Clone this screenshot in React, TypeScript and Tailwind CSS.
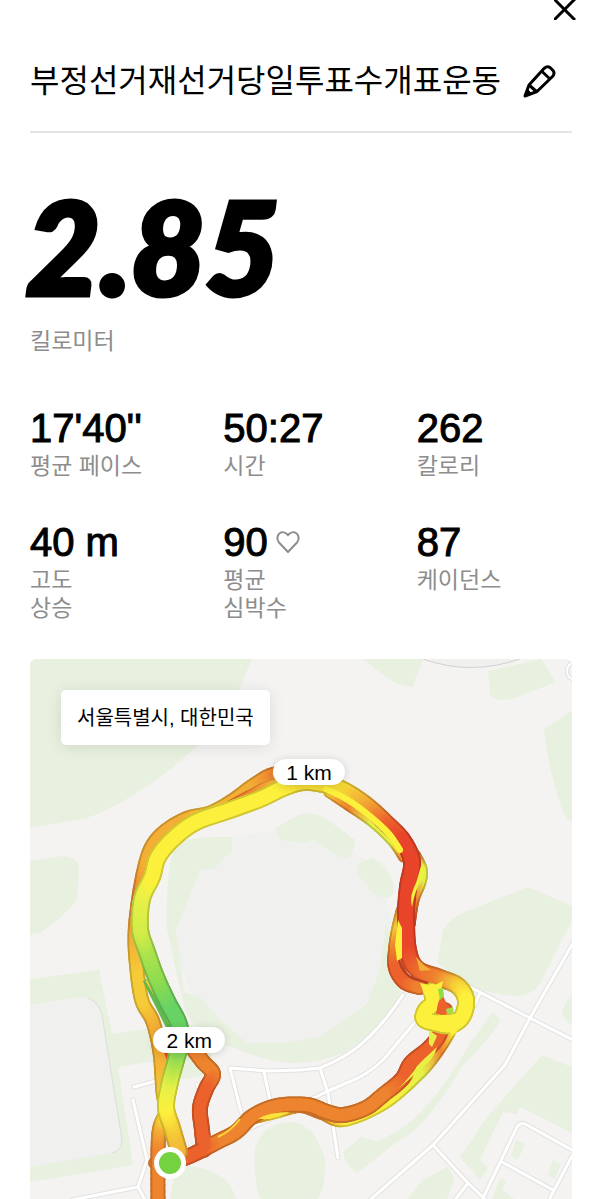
import type { ReactNode } from "react";

type TrackPoint = [x: number, y: number, color: string];

const RED = "#e8452a";
const RUST = "#ec622c";
const ORANGE = "#ee842f";
const AMBER = "#f3ae36";
const GOLD = "#f5cb38";
const YELLOW = "#fcf03c";
const LIME = "#e4f048";
const GREEN = "#68d264";

const outerLoop: TrackPoint[] = [
  [158, 1205, ORANGE],
  [158, 1150, ORANGE],
  [160, 1127, AMBER],
  [166, 1111, YELLOW],
  [163, 1092, GOLD],
  [160, 1053, AMBER],
  [153, 1022, AMBER],
  [142, 1001, GOLD],
  [137, 970, GOLD],
  [135, 935, AMBER],
  [139, 897, ORANGE],
  [146, 862, AMBER],
  [154, 843, AMBER],
  [168, 829, AMBER],
  [188, 818, AMBER],
  [210, 813, GOLD],
  [232, 801, AMBER],
  [254, 785, AMBER],
  [275, 774, ORANGE],
  [300, 777, GOLD],
];

const outerStrand: TrackPoint[] = [
  [228, 805, RUST],
  [250, 793, ORANGE],
  [272, 783, AMBER],
  [300, 780, GOLD],
];

const mainLoop: TrackPoint[] = [
  [179, 1152, AMBER],
  [172, 1128, GOLD],
  [166, 1107, YELLOW],
  [170, 1082, LIME],
  [176, 1060, "#a5e04e"],
  [181, 1040, GREEN],
  [178, 1022, GREEN],
  [168, 1003, GREEN],
  [156, 977, "#90dc50"],
  [147, 952, "#a8e24e"],
  [140, 929, "#d2ec48"],
  [142, 899, LIME],
  [152, 877, YELLOW],
  [158, 857, YELLOW],
  [174, 838, YELLOW],
  [196, 822, YELLOW],
  [227, 811, YELLOW],
  [260, 799, YELLOW],
  [283, 788, YELLOW],
  [303, 782, "#f5dc36"],
  [323, 784, "#f5dc36"],
  [343, 790, "#f5dc36"],
  [366, 805, AMBER],
  [388, 825, RUST],
  [403, 841, RED],
  [412, 862, RED],
  [408, 887, RED],
  [406, 915, RED],
  [408, 950, RED],
  [417, 969, RUST],
  [440, 978, ORANGE],
  [458, 986, GOLD],
  [466, 1000, YELLOW],
  [462, 1017, YELLOW],
  [450, 1025, YELLOW],
  [436, 1023, YELLOW],
  [424, 1019, YELLOW],
  [426, 1010, YELLOW],
  [433, 1003, YELLOW],
  [432, 991, YELLOW],
];

const rightInside: TrackPoint[] = [
  [328, 793, GOLD],
  [349, 807, ORANGE],
  [372, 823, LIME],
  [392, 842, LIME],
  [403, 858, ORANGE],
];

const rightEdge: TrackPoint[] = [
  [326, 789, YELLOW],
  [348, 800, YELLOW],
  [371, 817, YELLOW],
  [389, 834, YELLOW],
  [400, 850, YELLOW],
];

const rightBump: TrackPoint[] = [
  [414, 855, RED],
  [421, 869, LIME],
  [420, 882, LIME],
  [413, 900, ORANGE],
  [409, 925, RED],
];

const innerDescent: TrackPoint[] = [
  [404, 910, ORANGE],
  [399, 930, GOLD],
  [396, 950, ORANGE],
  [396, 968, RUST],
  [405, 982, RUST],
  [420, 987, ORANGE],
];

const bottomShadow: TrackPoint[] = [
  [449, 1032, YELLOW],
  [437, 1051, ORANGE],
  [419, 1073, LIME],
  [384, 1103, YELLOW],
  [344, 1120, YELLOW],
  [322, 1113, ORANGE],
  [300, 1106, ORANGE],
  [275, 1112, YELLOW],
  [250, 1118, ORANGE],
];

const bottomLeg: TrackPoint[] = [
  [445, 1010, RUST],
  [440, 1033, RUST],
  [429, 1048, RUST],
  [411, 1063, RUST],
  [402, 1079, RUST],
  [383, 1095, ORANGE],
  [366, 1108, ORANGE],
  [343, 1115, ORANGE],
  [327, 1112, ORANGE],
  [307, 1105, ORANGE],
  [277, 1106, ORANGE],
  [253, 1116, ORANGE],
  [236, 1132, ORANGE],
  [217, 1142, ORANGE],
  [200, 1151, RUST],
  [187, 1157, RUST],
  [170, 1163, RUST],
];

const shortcut: TrackPoint[] = [
  [194, 1050, ORANGE],
  [203, 1062, ORANGE],
  [213, 1074, ORANGE],
  [206, 1089, RUST],
  [200, 1108, RUST],
  [202, 1130, RUST],
  [204, 1150, RUST],
];

function mix(from: string, to: string, t: number, shade = 1) {
  const channel = (hex: string, i: number) =>
    parseInt(hex.slice(1 + i * 2, 3 + i * 2), 16);
  const rgb = [0, 1, 2].map((i) =>
    Math.round(
      (channel(from, i) + (channel(to, i) - channel(from, i)) * t) * shade,
    ),
  );
  return `rgb(${rgb.join(",")})`;
}

// Catmull-Rom, b -> c
function curve(a: number, b: number, c: number, d: number, t: number) {
  return (
    0.5 *
    (2 * b +
      (c - a) * t +
      (2 * a - 5 * b + 4 * c - d) * t * t +
      (3 * b - a - 3 * c + d) * t * t * t)
  );
}

const STEPS = 10;

function Track({
  points,
  width = 12,
  edge = 2,
}: {
  points: TrackPoint[];
  width?: number;
  edge?: number;
}) {
  const pieces: { d: string; fill: string; border: string }[] = [];
  for (let i = 0; i < points.length - 1; i++) {
    const p0 = points[Math.max(i - 1, 0)];
    const p1 = points[i];
    const p2 = points[i + 1];
    const p3 = points[Math.min(i + 2, points.length - 1)];
    for (let s = 0; s < STEPS; s++) {
      const at = (t: number) =>
        `${curve(p0[0], p1[0], p2[0], p3[0], t).toFixed(2)} ${curve(p0[1], p1[1], p2[1], p3[1], t).toFixed(2)}`;
      pieces.push({
        d: `M${at(s / STEPS)}L${at((s + 1) / STEPS)}`,
        fill: mix(p1[2], p2[2], s / STEPS),
        border: mix(p1[2], p2[2], s / STEPS, 0.83),
      });
    }
  }

  return (
    <g strokeLinecap="round" fill="none">
      {pieces.map((p, i) => (
        <path key={`b${i}`} d={p.d} stroke={p.border} strokeWidth={width + edge * 2} />
      ))}
      {pieces.map((p, i) => (
        <path key={`f${i}`} d={p.d} stroke={p.fill} strokeWidth={width} />
      ))}
    </g>
  );
}

const parks = [
  "M30 659H252L240 687Q220 725 195 748Q160 780 120 803Q95 816 86 818L30 828Z",
  "M30 861L62 856Q79 857 79 870L77 900Q58 922 40 933L30 935Z",
  "M30 979L99 970L112 1034L160 1027L215 1050L202 1076L165 1082L155 1061L118 1067L133 1165L30 1182Z",
  "M362 659H423L413 687Q400 686 390 680Z",
  "M488 671L541 659L556 682L512 699Q492 702 490 694Z",
  "M572 711L544 729Q546 760 562 810Q565 818 572 822Z",
  "M443 930Q450 918 467 911L528 887L572 906V920L542 980Q533 997 513 996Q490 994 473 987L437 963Z",
  "M493 1012L500 1020Q498 1030 463 1065Q445 1095 440 1100Q420 1130 397 1142L357 1173Q345 1165 343 1152L361 1137L377 1141Q405 1130 423 1110Q450 1080 470 1043Z",
  "M542 1055L572 1067V1133L520 1107L517 1114L503 1112L480 1160L488 1168L480 1180L460 1157L487 1117Z",
  "M572 993L562 1010Q563 1022 572 1024Z",
  "M447 1167Q455 1175 453 1183L447 1199H407L423 1180Z",
  "M289 1122Q315 1122 325 1160Q326 1185 318 1199H260Q253 1180 255 1148Q265 1122 289 1122Z",
  "M176 1166Q205 1164 225 1180Q233 1187 236 1199H170Z",
  "M516 1140L525 1144L518 1160L511 1156Z",
  "M553 1160L561 1164L555 1179L548 1175Z",
  "M500 1178L506 1181L502 1189L514 1199H492Z",
];

const stadiumParks = [
  "M176 842Q200 836 232 837V850L214 869L200 870L185 907L176 930L182 975L184 992L200 997L220 1020L247 1043H287L320 1037L357 1011L367 1003L380 970L386 925L402 960L400 997Q375 1035 343 1053Q320 1063 290 1063Q260 1060 235 1048Q200 1040 185 1010L167 930Q165 870 176 842Z",
  "M275 828L300 814Q318 812 328 820L355 840Q354 856 346 858Q338 858 330 851L313 840L305 843L280 840Z",
  "M357 867Q362 860 372 858Q388 865 394 886Q394 896 388 898Q375 897 370 891Q365 881 357 875Z",
];

const roads = [
  "M573 943L530 1018L505 1065L433 1145L370 1200",
  "M466 985L530 1018L573 1040",
  "M480 993L474 1006",
  "M403 995Q385 1022 368 1038Q350 1056 320 1068L300 1070L267 1071L230 1068L241 1112",
  "M264 1072L270 1100",
  "M417 1020L383 1060Q370 1072 358 1078L328 1091L247 1130",
  "M320 1068L328 1093L338 1158",
  "M433 1145L468 1183L486 1200",
  "M468 1183L455 1200",
  "M483 1198L517 1127Q521 1121 527 1125L572 1150",
  "M502 1162L553 1190",
  "M572 1156L550 1198",
  "M133 1100L147 1160L138 1187L145 1200",
  "M138 1187L72 1200",
  "M147 1161L163 1155",
  "M134 1087L156 1081",
  "M197 1084L201 1096",
];

function RouteMap() {
  return (
    <svg
      viewBox="30 659 542 540"
      className="block w-full"
      role="img"
      aria-label="러닝 경로 지도"
    >
      <rect x="30" y="659" width="542" height="540" fill="#f4f3f2" />
      {parks.map((d) => (
        <path key={d} d={d} fill="#e8f0df" />
      ))}
      <path
        d="M30 1005L80 997Q97 998 102 1015L122 1140Q122 1151 112 1153L30 1167Z"
        fill="#f0f0ef"
      />
      <path
        d="M88 998Q99 1002 102 1015L122 1140Q122 1151 112 1153"
        fill="none"
        stroke="#dcdddb"
      />
      <path
        d="M213 845Q250 830 290 830Q350 840 375 870Q400 920 385 965Q370 1010 320 1040Q270 1055 235 1040Q190 1010 177 950Q175 880 213 845Z"
        fill="#f0f0ef"
      />
      {stadiumParks.map((d) => (
        <path key={d} d={d} fill="#e8f0df" />
      ))}
      <path d="M423 659Q470 676 520 659" fill="#f0f0ef" stroke="#cfd2cc" />
      <g fill="none" strokeLinecap="round" strokeLinejoin="round">
        {roads.map((d) => (
          <path key={d} d={d} stroke="#e3e2e1" strokeWidth="5" />
        ))}
        {roads.map((d) => (
          <path key={d} d={d} stroke="#ffffff" strokeWidth="3" />
        ))}
      </g>
      <ellipse cx="573" cy="671" rx="6" ry="8" fill="#f4f3f2" stroke="#dedede" strokeWidth="4" />
      <ellipse cx="573" cy="671" rx="6" ry="8" fill="none" stroke="#fff" strokeWidth="2" />

      <circle cx="154" cy="1163" r="5" fill={ORANGE} stroke="#c8702a" strokeWidth="2" />
      <Track points={outerLoop} width={11} />
      <Track points={outerStrand} width={5} edge={1} />
      <path d="M145 980L156 1002L167 1024L172 1034" stroke="#62b84c" strokeWidth="5" fill="none" />
      <path d="M147 980L161 1003L173 1028" stroke={GOLD} strokeWidth="4" fill="none" />
      <path d="M164 1053L168 1050L167 1060Z" fill={RED} />
      <Track points={rightInside} width={5} />
      <Track points={rightBump} width={9} />
      <Track points={innerDescent} />
      <Track points={bottomShadow} width={10} />
      <Track points={shortcut} />
      <Track points={bottomLeg} />
      <path d="M424 1059L437 1047Q434 1059 424 1066Q411 1078 398 1089Q412 1075 417 1066Z" fill="#eaf043" />
      <path d="M258 1119Q268 1112 290 1112L270 1119Z" fill="#fce23a" />
      <path d="M218 1137Q231 1131 240 1119" stroke="#f9d63b" strokeWidth="2" fill="none" />
      <path d="M204 1135L205 1149" stroke={RUST} strokeWidth="12" fill="none" />
      <path d="M429 1030L437 1036L432 1047L429 1044Z" fill={LIME} />
      <Track points={mainLoop} width={14} />
      <Track points={rightEdge} width={6} edge={0} />

      <path d="M421 866Q427 873 421 881Q415 890 412 907Q409 896 416 883Z" fill="#eef13f" />
      <path d="M398 920L402 928V958L397 961L395 945Z" fill={YELLOW} />
      <path d="M416 957L425 966L431 970L420 971Z" fill={AMBER} />
      <path d="M399 960Q402 974 414 979L428 983" stroke="#b43c20" strokeWidth="2" fill="none" />
      <path d="M420 983L433 986L443 981L441 991L440 1003L432 1003L424 994Z" fill={YELLOW} />
      <path d="M442 994L448 1006L450 1014H436L438 1003Z" fill={RUST} />
      <path d="M438 989L443 988L444 996L440 1000Z" fill="#8fdc45" />
      <path d="M446 1009L453 1007L454 1014L447 1014Z" fill="#a5dc45" />
      <path d="M428 1016L456 1014L464 1019Q459 1031 452 1036L447 1028L430 1028Z" fill={YELLOW} />
      <circle cx="170" cy="1163" r="16" fill="#fff" />
      <circle cx="170" cy="1163" r="11" fill="#74d13f" />
    </svg>
  );
}

function KmMarker({ className, children }: { className: string; children: ReactNode }) {
  return (
    <span
      className={`absolute flex h-[26px] w-[72px] -translate-x-1/2 -translate-y-1/2 items-center justify-center rounded-full bg-white text-[21px] leading-none shadow-[0_1px_8px_rgba(0,0,0,0.15)] ${className}`}
    >
      {children}
    </span>
  );
}

const stats = [
  { value: "17'40''", label: ["평균 페이스"] },
  { value: "50:27", label: ["시간"] },
  { value: "262", label: ["칼로리"] },
  { value: "40 m", label: ["고도", "상승"] },
  { value: "90", label: ["평균", "심박수"], heart: true },
  { value: "87", label: ["케이던스"] },
];

export default function App() {
  return (
    <main className="overflow-hidden bg-white px-[30px] font-['Liberation_Sans','Noto_Sans_CJK_KR',sans-serif] text-black">
      <div className="flex h-5 justify-end">
        <button type="button" aria-label="닫기" className="-mr-1 h-5 cursor-pointer">
          <svg width="22" height="20" viewBox="0 0 22 20" stroke="currentColor" strokeWidth="3">
            <path d="M0 -1L21 20M21 -1L0 20" />
          </svg>
        </button>
      </div>

      <header className="mt-8 flex h-[81px] items-start justify-between border-b-2 border-[#e5e5e5] pr-4">
        <h1 className="text-[32px] leading-[58px] font-normal whitespace-nowrap">
          부정선거재선거당일투표수개표운동
        </h1>
        <button type="button" aria-label="제목 수정" className="mt-3 cursor-pointer">
          <svg
            width="34"
            height="34"
            viewBox="0 0 34 34"
            fill="none"
            stroke="currentColor"
            strokeWidth="3"
            strokeLinejoin="round"
          >
            <path d="M3 32L7 21L22 4.500Q25 1.500 28 3.500L31 6.500Q33 9 31 12L15 27.500Z" />
            <path d="M19.500 7L28 15M7 21L14.500 27.500" />
            <path d="M3 32L5.500 25L9 29.500Z" fill="currentColor" strokeWidth="1" />
          </svg>
        </button>
      </header>

      <section className="mt-12">
        <p className="-ml-1 h-[130px] font-[Lato,sans-serif] text-[128px] leading-[130px] font-black italic [-webkit-text-stroke:5px_black]">
          2.85
        </p>
        <p className="mt-4 text-[23px] leading-7 text-[#8d8d8d]">킬로미터</p>
      </section>

      <dl className="mt-[53px] grid grid-cols-3 gap-x-[38px] gap-y-[42px]">
        {stats.map((stat) => (
          <div key={stat.value} className="flex flex-col-reverse justify-end gap-1">
            <dt className="text-[23px] leading-7 text-[#8d8d8d]">
              {stat.label.map((line) => (
                <span key={line} className="block whitespace-nowrap">
                  {line}
                </span>
              ))}
            </dt>
            <dd className="flex items-center gap-2 text-[40px] leading-10 whitespace-nowrap [-webkit-text-stroke:1px_black]">
              {stat.value}
              {stat.heart && (
                <svg
                  width="24"
                  height="24"
                  viewBox="0 0 24 24"
                  fill="none"
                  stroke="#8d8d8d"
                  strokeWidth="2"
                  aria-hidden="true"
                >
                  <path d="M12 22L3 12.500C0.500 9.500 1 5.500 3.500 3.500C6 1.500 9.500 2 12 5C14.500 2 18 1.500 20.500 3.500C23 5.500 23.500 9.500 21 12.500Z" />
                </svg>
              )}
            </dd>
          </div>
        ))}
      </dl>

      <section className="relative mt-[37px] overflow-hidden rounded-t-md">
        <RouteMap />
        <p className="absolute top-[31px] left-[31px] flex h-[55px] items-center rounded-[5px] bg-white px-4 text-[20px] leading-none whitespace-nowrap shadow-[0_2px_16px_rgba(0,0,0,0.1)]">
          서울특별시, 대한민국
        </p>
        <KmMarker className="top-[21%] left-[51.5%]">1 km</KmMarker>
        <KmMarker className="top-[70.6%] left-[29.4%]">2 km</KmMarker>
      </section>
    </main>
  );
}
